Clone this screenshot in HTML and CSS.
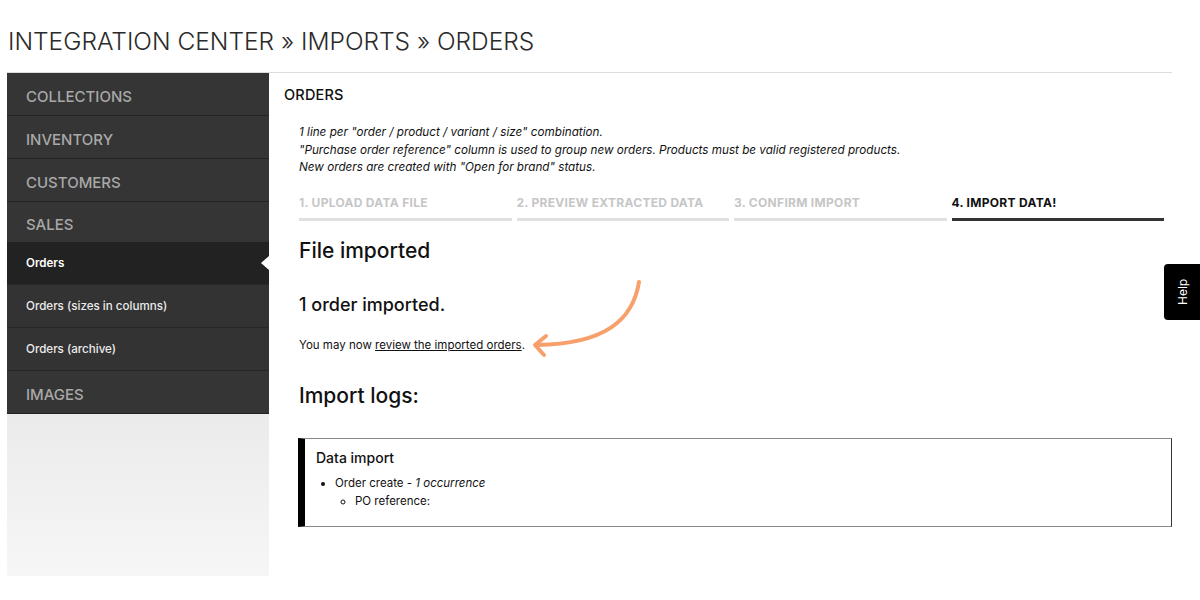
FILE: index.html
```html
<!DOCTYPE html>
<html lang="en">
<head>
    <meta charset="UTF-8">
    <title>Integration center - Imports - Orders</title>
    <link rel="stylesheet" href="styles.css">
</head>
<body>
    <div class="page">
        <h1 class="crumbs">INTEGRATION CENTER &raquo; IMPORTS &raquo; ORDERS</h1>

        <div class="layout">
            <nav class="sidebar">
                <div class="nav-head">COLLECTIONS</div>
                <div class="nav-head">INVENTORY</div>
                <div class="nav-head">CUSTOMERS</div>
                <div class="nav-head nav-head-open">SALES</div>
                <a class="nav-item active" href="#">Orders</a>
                <a class="nav-item" href="#">Orders (sizes in columns)</a>
                <a class="nav-item" href="#">Orders (archive)</a>
                <div class="nav-head nav-head-last">IMAGES</div>
                <div class="nav-fill"></div>
            </nav>

            <main class="content">
                <h2 class="section-title">ORDERS</h2>

                <div class="body">
                    <p class="intro">
                        1 line per "order / product / variant / size" combination.<br>
                        "Purchase order reference" column is used to group new orders. Products must be valid registered products.<br>
                        New orders are created with "Open for brand" status.
                    </p>

                    <div class="steps">
                        <div class="step">1. UPLOAD DATA FILE</div>
                        <div class="step">2. PREVIEW EXTRACTED DATA</div>
                        <div class="step">3. CONFIRM IMPORT</div>
                        <div class="step current">4. IMPORT DATA!</div>
                    </div>

                    <h3 class="big">File imported</h3>
                    <h4 class="medium">1 order imported.</h4>
                    <p class="note">You may now <a href="#">review the imported orders</a>.</p>

                    <h3 class="big logs-title">Import logs:</h3>

                    <div class="log-box">
                        <div class="log-title">Data import</div>
                        <ul class="log-list">
                            <li>Order create - <em>1 occurrence</em>
                                <ul>
                                    <li>PO reference:</li>
                                </ul>
                            </li>
                        </ul>
                    </div>
                </div>

                <!-- annotation arrow pointing at the link -->
                <svg class="arrow" width="120" height="90" viewBox="0 0 120 90">
                    <path d="M114 2 C 108 40, 80 64, 12 65" fill="none" stroke="#f7a06c" stroke-width="4" stroke-linecap="round"/>
                    <path d="M21 56 L10 65 L19 75" fill="none" stroke="#f7a06c" stroke-width="4" stroke-linecap="round" stroke-linejoin="round"/>
                </svg>
            </main>
        </div>
    </div>

    <div class="help-tab">Help</div>
</body>
</html>
```

FILE: styles.css
```css
body {
    margin: 0;
    background: #fff;
    color: #111;
    font-family: Inter, "Liberation Sans", sans-serif;
}

.page {
    width: 1165px;
    margin-left: 7px;
}

.crumbs {
    margin: 0;
    padding: 27px 0 16px 1px;
    font-size: 24.5px;
    font-weight: 300;
    line-height: 29px;
    color: #2a2a2a;
    border-bottom: 1px solid #ddd;
}

.layout {
    display: flex;
}

/* sidebar */
.sidebar {
    width: 262px;
    flex-shrink: 0;
    display: flex;
    flex-direction: column;
    height: 503px;
}

.nav-head {
    height: 42px;
    line-height: 47px;
    padding-left: 19px;
    background: #353535;
    border-bottom: 1px solid #232323;
    color: #a8a8a8;
    font-size: 15px;
    font-weight: 500;
}

.nav-head-open {
    height: 40px;
    border-bottom: none;
    line-height: 46px;
}

.nav-head-last {
    line-height: 48px;
}

.nav-item {
    position: relative;
    display: block;
    height: 42px;
    line-height: 43px;
    padding-left: 19px;
    background: #333;
    border-bottom: 1px solid #272727;
    color: #ececec;
    font-size: 11.6px;
    font-weight: 500;
    text-decoration: none;
}

.nav-item.active {
    background: #222;
    color: #fff;
    font-weight: 600;
}

.nav-item.active::after {
    content: "";
    position: absolute;
    right: 0;
    top: 14px;
    border-top: 7px solid transparent;
    border-bottom: 7px solid transparent;
    border-right: 8px solid #fff;
}

.nav-fill {
    flex: 1;
    background: linear-gradient(#ebebeb, #f6f6f6);
}

/* main column */
.content {
    position: relative;
    flex: 1;
    padding-left: 15px;
}

.section-title {
    margin: 0;
    padding: 13px 0 0;
    font-size: 14.5px;
    font-weight: 500;
    line-height: 18px;
    letter-spacing: 0.2px;
}

.body {
    padding-left: 15px;
    padding-right: 8px;
}

.intro {
    margin: 20px 0 0;
    font-size: 11.7px;
    font-style: italic;
    line-height: 17.5px;
    color: #111;
}

.steps {
    display: grid;
    grid-template-columns: repeat(4, 1fr);
    gap: 5px;
    margin-top: 19px;
}

.step {
    padding-bottom: 8px;
    border-bottom: 3px solid #e0e0e0;
    font-size: 12px;
    font-weight: 700;
    line-height: 14px;
    letter-spacing: 0.3px;
    color: #c6c6c6;
}

.step.current {
    color: #111;
    border-bottom-color: #333;
}

.big {
    margin: 16px 0 0;
    font-size: 21px;
    font-weight: 500;
    line-height: 28px;
}

.medium {
    margin: 28px 0 0;
    font-size: 18px;
    font-weight: 500;
    line-height: 24px;
}

.note {
    margin: 20px 0 0;
    font-size: 11.5px;
    line-height: 16px;
}

.note a {
    color: #111;
}

.logs-title {
    margin-top: 29px;
}

.log-box {
    margin: 28px -8px 0 -1px;
    height: 78px;
    border: 1px solid #8a8a8a;
    border-right-color: #333;
    border-left: 7px solid #000;
    padding: 9px 14px 0 11px;
}

.log-title {
    font-size: 14px;
    font-weight: 500;
    line-height: 20px;
}

.log-list {
    margin: 6px 0 0;
    padding-left: 19px;
    font-size: 11.5px;
    line-height: 18px;
}

.log-list ul {
    margin: 0;
    padding-left: 20px;
    list-style: circle;
}

.arrow {
    position: absolute;
    left: 256px;
    top: 207px;
}

.help-tab {
    position: absolute;
    right: 0;
    top: 264px;
    width: 36px;
    height: 56px;
    background: #000;
    color: #fff;
    font-size: 12px;
    display: flex;
    align-items: center;
    justify-content: center;
    writing-mode: vertical-rl;
    transform: rotate(180deg);
    border-radius: 0 4px 4px 0;
}
```
